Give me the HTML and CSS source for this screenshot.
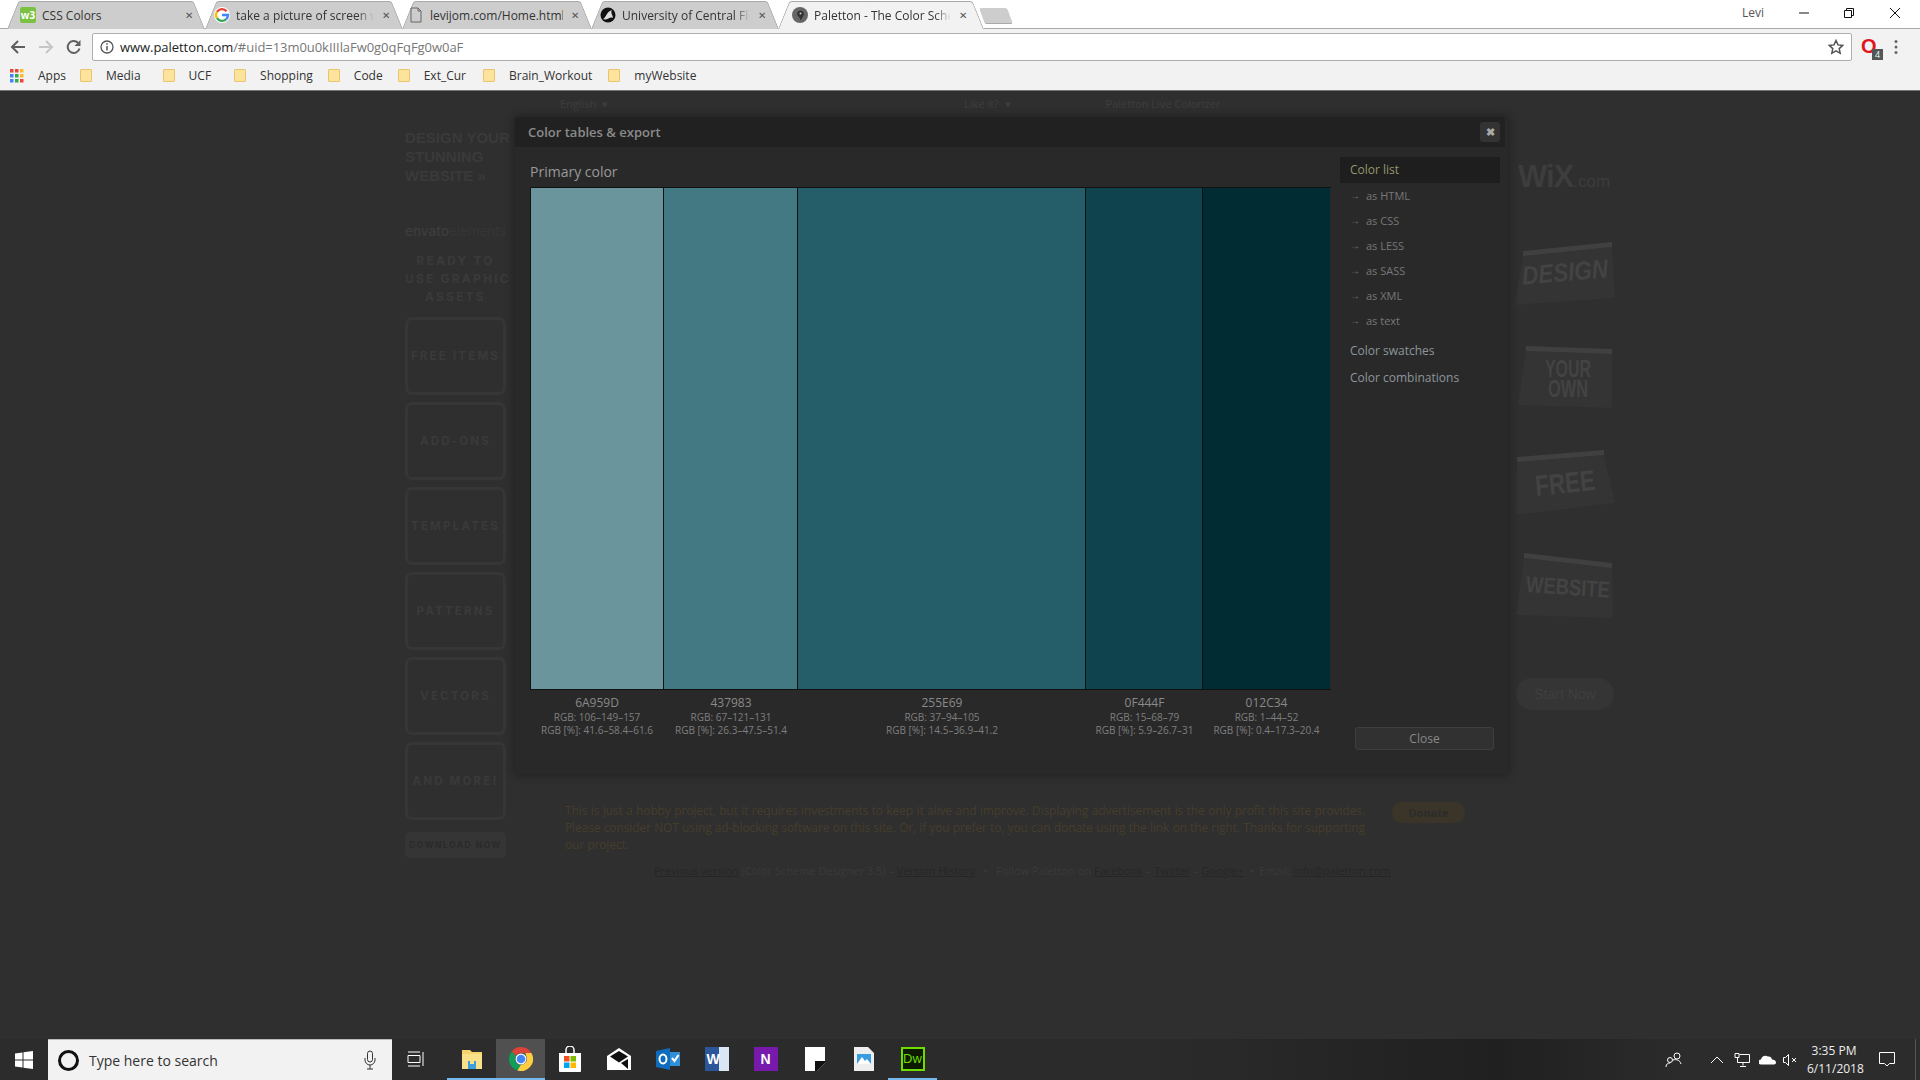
FILE: index.html
```html
<!DOCTYPE html>
<html lang="en">
<head>
    <meta charset="UTF-8">
    <title>Paletton - The Color Scheme Designer</title>
    <link rel="stylesheet" href="styles.css">
</head>
<body>
    <!-- browser chrome -->
    <div class="tabstrip">
        <div class="tab tab-1">
            <span class="w3-icon">w3</span>
            <span class="tab-title">CSS Colors</span>
            <span class="tab-close">&#10005;</span>
        </div>
        <div class="tab tab-2">
            <svg class="fav" viewBox="0 0 16 16">
                <circle cx="8" cy="8" r="8" fill="#fff"/>
                <path d="M12.6 4.2A6 6 0 0 0 3 4.8" fill="none" stroke="#ea4335" stroke-width="2.4"/>
                <path d="M3 4.8a6 6 0 0 0 0 6.4" fill="none" stroke="#fbbc05" stroke-width="2.4"/>
                <path d="M3 11.2a6 6 0 0 0 9 1.2" fill="none" stroke="#34a853" stroke-width="2.4"/>
                <path d="M8 8h6a6 6 0 0 1-2 4.4" fill="none" stroke="#4285f4" stroke-width="2.4"/>
            </svg>
            <span class="tab-title">take a picture of screen w</span>
            <span class="tab-close">&#10005;</span>
        </div>
        <div class="tab tab-3">
            <svg class="fav" viewBox="0 0 16 16"><path d="M3 1h7l3 3v11H3zM10 1v3h3" fill="none" stroke="#666"/></svg>
            <span class="tab-title">levijom.com/Home.html</span>
            <span class="tab-close">&#10005;</span>
        </div>
        <div class="tab tab-4">
            <svg class="fav" viewBox="0 0 16 16"><circle cx="8" cy="8" r="7.5" fill="#111"/><path d="M3 12c3-1 3-7 9-9-2 3 1 5 1 8-3-2-6 3-10 1z" fill="#ddd"/></svg>
            <span class="tab-title">University of Central Flori</span>
            <span class="tab-close">&#10005;</span>
        </div>
        <div class="tab tab-5 active">
            <svg class="fav" viewBox="0 0 16 16"><circle cx="8" cy="8" r="8" fill="#666"/><path d="M5 7a3.5 3.5 0 1 1 6 2.500c-1 1-1.500 3-2 4-1-1-1-3-2.500-4A3.500 3.500 0 0 1 5 7z" fill="#333"/><circle cx="8.500" cy="6.500" r="1" fill="#ccc"/></svg>
            <span class="tab-title">Paletton - The Color Sche</span>
            <span class="tab-close">&#10005;</span>
        </div>
        <div class="new-tab"></div>
        <div class="win-controls">
            <span class="profile">Levi</span>
            <svg class="win-btn btn-min" viewBox="0 0 10 10"><path d="M0 5h10" stroke="#111"/></svg>
            <svg class="win-btn btn-max" viewBox="0 0 10 10"><path d="M.5 2.500h7v7h-7zM2.500 2.500v-2h7v7h-2" fill="none" stroke="#111"/></svg>
            <svg class="win-btn btn-x" viewBox="0 0 10 10"><path d="M0 0l10 10M10 0L0 10" stroke="#111"/></svg>
        </div>
    </div>

    <div class="toolbar">
        <svg class="nav nav-back" viewBox="0 0 16 16"><path d="M15 8H2M8 2L2 8l6 6" fill="none" stroke="#5f5f5f" stroke-width="2"/></svg>
        <svg class="nav nav-fwd" viewBox="0 0 16 16"><path d="M1 8h13M8 2l6 6-6 6" fill="none" stroke="#c6c6c6" stroke-width="2"/></svg>
        <svg class="nav nav-reload" viewBox="0 0 16 16"><path d="M13.500 9.500A6 6 0 1 1 12 3.800" fill="none" stroke="#5f5f5f" stroke-width="2"/><path d="M14.500 1v6h-6z" fill="#5f5f5f"/></svg>
        <div class="omnibox">
            <svg class="info" viewBox="0 0 14 14"><circle cx="7" cy="7" r="6" fill="none" stroke="#555" stroke-width="1.300"/><path d="M7 6v4.500M7 3.300v1.500" stroke="#555" stroke-width="1.500"/></svg>
            <span class="url">www.paletton.com<span class="url-rest">/#uid=13m0u0kIIIlaFw0g0qFqFg0w0aF</span></span>
            <svg class="star" viewBox="0 0 16 16"><path d="M8 1.500l2 4.400 4.800.5-3.600 3.200 1 4.700L8 11.900l-4.200 2.400 1-4.700L1.200 6.400 6 5.900z" fill="none" stroke="#555" stroke-width="1.500"/></svg>
        </div>
        <div class="ext-icon">
            <span class="opera">O</span>
            <span class="ext-badge">4</span>
        </div>
        <svg class="menu-dots" viewBox="0 0 4 16"><circle cx="2" cy="2.500" r="1.500" fill="#666"/><circle cx="2" cy="8" r="1.500" fill="#666"/><circle cx="2" cy="13.500" r="1.500" fill="#666"/></svg>
    </div>

    <div class="bookmarks">
        <svg class="apps-icon" viewBox="0 0 14 14">
            <rect width="3.500" height="3.500" fill="#e8453c"/><rect x="5" width="3.500" height="3.500" fill="#e8453c"/><rect x="10" width="3.500" height="3.500" fill="#f9bb2d"/>
            <rect y="5" width="3.500" height="3.500" fill="#4285f4"/><rect x="5" y="5" width="3.500" height="3.500" fill="#34a853"/><rect x="10" y="5" width="3.500" height="3.500" fill="#f9bb2d"/>
            <rect y="10" width="3.500" height="3.500" fill="#4285f4"/><rect x="5" y="10" width="3.500" height="3.500" fill="#34a853"/><rect x="10" y="10" width="3.500" height="3.500" fill="#e8453c"/>
        </svg>
        <span class="bm bm-apps">Apps</span>
        <span class="folder folder-1"></span><span class="bm">Media</span>
        <span class="folder folder-2"></span><span class="bm">UCF</span>
        <span class="folder folder-3"></span><span class="bm">Shopping</span>
        <span class="folder folder-4"></span><span class="bm">Code</span>
        <span class="folder folder-5"></span><span class="bm">Ext_Cur</span>
        <span class="folder folder-6"></span><span class="bm">Brain_Workout</span>
        <span class="folder folder-7"></span><span class="bm">myWebsite</span>
    </div>

    <!-- the dimmed page -->
    <main class="page">
        <aside class="left-ad">
            <div class="ad-title">DESIGN YOUR<br>STUNNING<br>WEBSITE &raquo;</div>
            <div class="envato"><b>envato</b>elements</div>
            <div class="ready">READY TO<br>USE GRAPHIC<br>ASSETS</div>
            <div class="ad-box">FREE ITEMS</div>
            <div class="ad-box">ADD-ONS</div>
            <div class="ad-box">TEMPLATES</div>
            <div class="ad-box">PATTERNS</div>
            <div class="ad-box">VECTORS</div>
            <div class="ad-box">AND MORE!</div>
            <div class="ad-download">DOWNLOAD NOW</div>
        </aside>

        <section class="center">
            <div class="top-row">
                <span class="lang">English &nbsp;&#9662;</span>
                <span class="like">Like it? &nbsp;&#9662;</span>
                <span class="live">Paletton Live Colorizer</span>
            </div>
            <div class="hobby">
                <p>This is just a hobby project, but it requires investments to keep it alive and improve. Displaying advertisement is the only profit this site provides. Please consider NOT using ad-blocking software on this site. Or, if you prefer to, you can donate using the link on the right. Thanks for supporting our project.</p>
                <span class="donate">Donate</span>
            </div>
            <div class="credits"><u>Previous version</u> (Color Scheme Designer 3.5) &ndash; <u>Version History</u> &nbsp; &bull; &nbsp; Follow Paletton on <u>Facebook</u> &ndash; <u>Twitter</u> &ndash; <u>Google+</u> &nbsp;&bull;&nbsp; Email: <u>info@paletton.com</u></div>
        </section>

        <aside class="right-ad">
            <div class="wix"><b>WiX</b>.com</div>
            <svg class="wix-card" viewBox="0 0 110 75">
                <polygon class="card-body" points="13,20 102,11 105,62 5,69"/>
                <polygon class="card-bar" points="13,15 102,6 102,11 13,20"/>
                <text class="card-text" x="55" y="45" font-style="italic" font-size="26" textLength="86" lengthAdjust="spacingAndGlyphs" transform="rotate(-5 55 37)">DESIGN</text>
            </svg>
            <svg class="wix-card" viewBox="0 0 110 75">
                <polygon class="card-body" points="16,10 102,13 102,67 8,64"/>
                <polygon class="card-bar" points="16,5 102,8 102,13 16,10"/>
                <text class="card-text" x="58" y="36" font-size="23" textLength="46" lengthAdjust="spacingAndGlyphs">YOUR</text>
                <text class="card-text" x="58" y="56" font-size="23" textLength="40" lengthAdjust="spacingAndGlyphs">OWN</text>
            </svg>
            <svg class="wix-card" viewBox="0 0 110 75">
                <polygon class="card-body" points="7,16 94,9 105,57 6,69"/>
                <polygon class="card-bar" points="7,11 94,4 94,9 7,16"/>
                <text class="card-text" x="55" y="47" font-size="29" textLength="60" lengthAdjust="spacingAndGlyphs" transform="rotate(-6 55 37)">FREE</text>
            </svg>
            <svg class="wix-card" viewBox="0 0 110 75">
                <polygon class="card-body" points="14,7 102,17 103,67 6,64"/>
                <polygon class="card-bar" points="14,2 102,12 102,17 14,7"/>
                <text class="card-text" x="58" y="44" font-size="23" textLength="84" lengthAdjust="spacingAndGlyphs" transform="rotate(4 58 36)">WEBSITE</text>
            </svg>
            <div class="start-now">Start Now</div>
        </aside>

        <!-- modal -->
        <div class="modal">
            <div class="modal-head">
                <span>Color tables &amp; export</span>
                <span class="modal-x">&#10006;</span>
            </div>
            <div class="modal-body">
                <div class="table-col">
                    <h3>Primary color</h3>
                    <div class="swatches">
                        <div class="swatch sw-1"></div>
                        <div class="swatch sw-2"></div>
                        <div class="swatch sw-3"></div>
                        <div class="swatch sw-4"></div>
                        <div class="swatch sw-5"></div>
                    </div>
                    <div class="labels">
                        <div class="label sw-1"><h5>6A959D</h5><p>RGB: 106&ndash;149&ndash;157</p><p>RGB [%]: 41.6&ndash;58.4&ndash;61.6</p></div>
                        <div class="label sw-2"><h5>437983</h5><p>RGB: 67&ndash;121&ndash;131</p><p>RGB [%]: 26.3&ndash;47.5&ndash;51.4</p></div>
                        <div class="label sw-3"><h5>255E69</h5><p>RGB: 37&ndash;94&ndash;105</p><p>RGB [%]: 14.5&ndash;36.9&ndash;41.2</p></div>
                        <div class="label sw-4"><h5>0F444F</h5><p>RGB: 15&ndash;68&ndash;79</p><p>RGB [%]: 5.9&ndash;26.7&ndash;31</p></div>
                        <div class="label sw-5"><h5>012C34</h5><p>RGB: 1&ndash;44&ndash;52</p><p>RGB [%]: 0.4&ndash;17.3&ndash;20.4</p></div>
                    </div>
                </div>
                <div class="side">
                    <div class="side-item selected">Color list</div>
                    <div class="side-sub">&rarr;<span>as HTML</span></div>
                    <div class="side-sub">&rarr;<span>as CSS</span></div>
                    <div class="side-sub">&rarr;<span>as LESS</span></div>
                    <div class="side-sub">&rarr;<span>as SASS</span></div>
                    <div class="side-sub">&rarr;<span>as XML</span></div>
                    <div class="side-sub">&rarr;<span>as text</span></div>
                    <div class="side-item first">Color swatches</div>
                    <div class="side-item">Color combinations</div>
                    <button class="close-btn">Close</button>
                </div>
            </div>
        </div>
    </main>

    <!-- windows taskbar -->
    <footer class="taskbar">
        <div class="start">
            <svg viewBox="0 0 18 18" width="18" height="18"><path d="M0 2.500l7.500-1v7H0zM8.500 1.300L18 0v8.500H8.500zM0 9.500h7.500v7l-7.500-1zM8.500 9.500H18V18l-9.500-1.300z" fill="#fff"/></svg>
        </div>
        <div class="search">
            <span class="cortana"></span>
            <span class="search-text">Type here to search</span>
            <svg class="mic" viewBox="0 0 12 20" width="12" height="20"><rect x="3.500" y="1" width="5" height="11" rx="2.500" fill="none" stroke="#333"/><path d="M1 8v2a5 5 0 0 0 10 0V8M6 15v4M3 19h6" fill="none" stroke="#333"/></svg>
        </div>
        <div class="task-btn task-view">
            <svg viewBox="0 0 18 18" width="18" height="18"><path d="M1 5.500h12v7H1zM1 2h12M1 16h12M16 2v14" fill="none" stroke="#fff"/></svg>
        </div>
        <div class="task-btn open">
            <svg viewBox="0 0 24 24" width="24" height="24"><path d="M2 3h8l2 2h10v4H2z" fill="#f6d36a"/><path d="M2 7h20v15H2z" fill="#fbe08c"/><path d="M8 14h8v8H8z" fill="#3f9fdc"/><path d="M10 14h4v3h-4z" fill="#fbe08c"/></svg>
        </div>
        <div class="task-btn open current">
            <svg viewBox="0 0 24 24" width="24" height="24"><path d="M12 0a12 12 0 0 1 10.400 6H12a6 6 0 0 0-5.200 3L2.700 4.400A12 12 0 0 1 12 0z" fill="#db4437"/><path d="M2.700 4.400L6.800 9a6 6 0 0 0 5 9l-3.400 5.500A12 12 0 0 1 2.700 4.400z" fill="#0f9d58"/><path d="M22.400 6a12 12 0 0 1-14 17.500l3.400-5.500a6 6 0 0 0 5.400-9 6 6 0 0 0-1-3z" fill="#ffcd40"/><circle cx="12" cy="12" r="5.500" fill="#fff"/><circle cx="12" cy="12" r="4.300" fill="#4285f4"/></svg>
        </div>
        <div class="task-btn">
            <svg viewBox="0 0 24 26" width="24" height="26"><path d="M8 7V4a4 4 0 0 1 8 0v3" fill="none" stroke="#fff" stroke-width="1.500"/><path d="M1 7h22v18a1 1 0 0 1-1 1H2a1 1 0 0 1-1-1z" fill="#fff"/><rect x="6" y="10" width="5.500" height="5.500" fill="#f25022"/><rect x="12.500" y="10" width="5.500" height="5.500" fill="#7fba00"/><rect x="6" y="16.500" width="5.500" height="5.500" fill="#00a4ef"/><rect x="12.500" y="16.500" width="5.500" height="5.500" fill="#ffb900"/></svg>
        </div>
        <div class="task-btn">
            <svg viewBox="0 0 24 24" width="24" height="24"><path d="M0 9L12 1l12 8v14H0z" fill="#fff"/><path d="M3 9.500L12 4l9 5.500-9 6z" fill="#111"/><path d="M21 22l-7-6 7-4z" fill="#111"/></svg>
        </div>
        <div class="task-btn">
            <svg viewBox="0 0 24 24" width="24" height="24"><path d="M14 1L0 4v16l14 3z" fill="#0f6cbd"/><rect x="14" y="5" width="10" height="14" fill="#2f8fd8"/><ellipse cx="7" cy="12" rx="3.500" ry="4.500" fill="none" stroke="#fff" stroke-width="2"/><path d="M16 11l2.500 3 4-6" fill="none" stroke="#fff" stroke-width="2"/></svg>
        </div>
        <div class="task-btn">
            <span class="app-word">W</span>
        </div>
        <div class="task-btn">
            <span class="app-one">N</span>
        </div>
        <div class="task-btn">
            <svg viewBox="0 0 20 24" width="20" height="24"><path d="M0 0h20v16l-8 8H0z" fill="#fff"/><path d="M20 14v2l-8 8h-2v-10z" fill="#111"/></svg>
        </div>
        <div class="task-btn">
            <svg viewBox="0 0 20 24" width="20" height="24"><path d="M0 0h14l6 6v18H0z" fill="#eee"/><path d="M3 7h14v10H3z" fill="#3a9be0"/><path d="M3 17l5-7 3 4 2-2 4 5z" fill="#fff"/></svg>
        </div>
        <div class="task-btn open">
            <span class="app-dw">Dw</span>
        </div>

        <div class="tray">
            <svg class="tray-people" viewBox="0 0 18 16" width="18" height="16"><circle cx="12" cy="4" r="3" fill="none" stroke="#fff"/><circle cx="5" cy="8" r="2.500" fill="none" stroke="#fff"/><path d="M1 15c0-3 2-4 4-4M8 8c3-1 7 0 8 4" fill="none" stroke="#fff"/></svg>
            <svg class="tray-chevron" viewBox="0 0 14 8" width="14" height="8"><path d="M1 7l6-6 6 6" fill="none" stroke="#fff"/></svg>
            <svg class="tray-net" viewBox="0 0 16 14" width="16" height="14"><path d="M1 .5h4v4H1zM5.500 1.500h10v8h-12v-5M9 9.500v3M6 13.500h6" fill="none" stroke="#fff"/></svg>
            <svg class="tray-cloud" viewBox="0 0 17 11" width="17" height="11"><path d="M2 10.500a2.500 2.500 0 0 1 0-5c.5-3 4-5 7-3 2-.5 4 1 4 3 2 0 4 1 4 3 0 1-1 2-2 2z" fill="#fff"/></svg>
            <svg class="tray-vol" viewBox="0 0 15 12" width="15" height="12"><path d="M.5 3.500h2l3-3v11l-3-3h-2z" fill="none" stroke="#fff"/><path d="M9 4l4 4M13 4l-4 4" stroke="#fff"/></svg>
            <div class="clock"><div>3:35 PM</div><div>6/11/2018</div></div>
            <svg class="tray-note" viewBox="0 0 16 15" width="16" height="15"><path d="M.5.500h15v11h-5l-2.500 2.500-2.500-2.500h-5z" fill="none" stroke="#fff"/></svg>
            <span class="show-desktop"></span>
        </div>
    </footer>
</body>
</html>
```

FILE: styles.css
```css
* {
    box-sizing: border-box;
}
html, body {
    margin: 0;
    padding: 0;
    height: 100%;
    overflow: hidden;
}
body {
    width: 1920px;
    height: 1080px;
    display: flex;
    flex-direction: column;
    font-family: "Open Sans", "Liberation Sans", sans-serif;
    background: #2f2f2f;
}

/* tab strip */
.tabstrip {
    height: 29px;
    flex: none;
    background: #fff;
    border-bottom: 1px solid #aaa;
    display: flex;
    padding-left: 7px;
    align-items: flex-end;
}
.tab {
    position: relative;
    height: 28px;
    display: flex;
    align-items: center;
    isolation: isolate;
    font-size: 12px;
    color: #333;
    flex: none;
    margin-bottom: -1px;
}
.tab::before, .tab::after {
    content: "";
    position: absolute;
    top: 0;
    bottom: 0;
    width: 50%;
    background: #cdcdcd;
    border-top: 1px solid #a8a8a8;
    z-index: -1;
}
.tab::before {
    left: 0;
    border-left: 1px solid #a8a8a8;
    border-radius: 3px 0 0 0;
    transform-origin: bottom left;
    transform: skewX(-22deg);
}
.tab::after {
    right: 0;
    border-right: 1px solid #a8a8a8;
    border-radius: 0 3px 0 0;
    transform-origin: bottom right;
    transform: skewX(22deg);
}
.tab.active::before, .tab.active::after {
    background: #f2f2f2;
}
.tab-1 { width: 198px; padding-left: 13px; }
.tab-2 { width: 197px; padding-left: 9px; }
.tab-3 { width: 189px; padding-left: 6px; }
.tab-4 { width: 187px; padding-left: 9px; }
.tab-5 { width: 206px; padding-left: 14px; z-index: 2; }
.w3-icon {
    width: 16px;
    height: 16px;
    background: #7cc242;
    color: #fff;
    font-size: 10px;
    font-weight: 700;
    line-height: 16px;
    text-align: center;
    flex: none;
    border-radius: 2px;
}
.fav {
    width: 16px;
    height: 16px;
    flex: none;
}
.tab-title {
    margin-left: 6px;
    white-space: nowrap;
    overflow: hidden;
    flex: 1;
    min-width: 0;
    -webkit-mask-image: linear-gradient(to right, #000 88%, transparent);
    mask-image: linear-gradient(to right, #000 88%, transparent);
}
.tab-3 .tab-title, .tab-1 .tab-title {
    -webkit-mask-image: none;
    mask-image: none;
}
.tab-close {
    font-size: 10px;
    color: #555;
    margin: 0 12px 0 8px;
    flex: none;
}
.tab-5 .tab-close {
    margin-right: 17px;
}
.new-tab {
    width: 28px;
    height: 16px;
    margin: 0 0 4px -2px;
    background: #cdcdcd;
    border-bottom: 1px solid #aaa;
    border-radius: 2px;
    transform: skewX(20deg);
    flex: none;
}
.win-controls {
    margin-left: auto;
    display: flex;
    align-items: center;
    height: 28px;
    padding-bottom: 3px;
}
.profile {
    font-size: 12px;
    color: #555;
    margin-right: 35px;
}
.win-btn {
    width: 10px;
    height: 10px;
}
.btn-max { margin: 0 36px 0 35px; }
.btn-x { margin-right: 20px; }

/* toolbar */
.toolbar {
    height: 32px;
    flex: none;
    background: #f2f2f2;
    display: flex;
    align-items: center;
    padding-top: 3px;
}
.nav {
    width: 16px;
    height: 16px;
    flex: none;
}
.nav-back { margin-left: 10px; }
.nav-fwd { margin-left: 12px; }
.nav-reload { margin-left: 12px; }
.omnibox {
    margin-left: 10px;
    width: 1760px;
    height: 28px;
    background: #fff;
    border: 1px solid #aeaeae;
    border-radius: 2px;
    display: flex;
    align-items: center;
    padding: 0 7px 0 7px;
}
.info {
    width: 14px;
    height: 14px;
    flex: none;
}
.url {
    margin-left: 6px;
    font-size: 13px;
    color: #222;
    letter-spacing: -.05px;
}
.url-rest {
    color: #777;
}
.star {
    margin-left: auto;
    width: 16px;
    height: 16px;
}
.ext-icon {
    position: relative;
    width: 22px;
    margin-left: 9px;
    height: 22px;
}
.opera {
    color: #e0141e;
    font-family: "Liberation Sans", sans-serif;
    font-weight: 700;
    font-size: 20px;
    line-height: 20px;
}
.ext-badge {
    position: absolute;
    right: 0;
    bottom: -2px;
    width: 11px;
    height: 11px;
    background: #555;
    color: #dff;
    font-size: 9px;
    line-height: 11px;
    text-align: center;
}
.menu-dots {
    margin-left: 11px;
    width: 4px;
    height: 16px;
}

/* bookmarks */
.bookmarks {
    height: 29px;
    flex: none;
    background: #f2f2f2;
    display: flex;
    align-items: center;
    font-size: 12px;
    color: #333;
}
.apps-icon {
    width: 14px;
    height: 14px;
    margin-left: 10px;
}
.bm-apps { margin-left: 14px; }
.folder {
    width: 12px;
    height: 13px;
    background: #fde39b;
    border: 1px solid #e9c66d;
    border-radius: 1px;
}
.folder + .bm { margin-left: 14px; }
.folder-1 { margin-left: 14px; }
.folder-2 { margin-left: 22px; }
.folder-3 { margin-left: 23px; }
.folder-4 { margin-left: 15px; }
.folder-5 { margin-left: 15px; }
.folder-6 { margin-left: 17px; }
.folder-7 { margin-left: 16px; }

/* dimmed page behind the modal */
.page {
    position: relative;
    height: 950px;
    flex: none;
    display: flex;
    padding-left: 405px;
    background: #2f2f2f;
    border-top: 1px solid #777;
}
.left-ad {
    width: 101px;
    flex: none;
    padding-top: 37px;
    font-family: "Liberation Sans", sans-serif;
    color: #3a3a3a;
}
.ad-title {
    font-size: 15px;
    font-weight: 700;
    line-height: 19px;
    white-space: nowrap;
}
.envato {
    margin-top: 36px;
    font-family: "Inter", sans-serif;
    font-size: 13.500px;
    line-height: 21px;
    white-space: nowrap;
    color: #363636;
}
.envato b { color: #3d3d3d; font-weight: 500; }
.ready {
    margin-top: 10px;
    font-family: "Inter", sans-serif;
    font-size: 12px;
    font-weight: 700;
    letter-spacing: 2.200px;
    line-height: 18px;
    text-align: center;
    white-space: nowrap;
}
.ad-box {
    height: 78px;
    margin-top: 7px;
    border: 3px solid #363636;
    border-radius: 7px;
    font-family: "Inter", sans-serif;
    font-size: 11.500px;
    font-weight: 700;
    letter-spacing: 2.200px;
    display: flex;
    align-items: center;
    justify-content: center;
    white-space: nowrap;
}
.ready + .ad-box {
    margin-top: 11px;
}
.ad-download {
    height: 26px;
    margin-top: 12px;
    background: #353535;
    border-radius: 5px;
    color: #2a2a2a;
    font-family: "Inter", sans-serif;
    font-size: 8.500px;
    font-weight: 700;
    letter-spacing: 1.500px;
    line-height: 26px;
    text-align: center;
    white-space: nowrap;
}
.center {
    width: 1004px;
    flex: none;
    padding-left: 59px;
    font-size: 12px;
}
.top-row {
    height: 28px;
    padding: 5px 0 0 0;
    margin-left: -5px;
    font-size: 11px;
    line-height: 16px;
    color: #3e3e3e;
    display: flex;
}
.like { margin-left: 356px; }
.live { margin-left: 95px; }
.hobby {
    margin-top: 683px;
    display: flex;
    align-items: flex-start;
}
.hobby p {
    margin: 0;
    width: 800px;
    line-height: 17px;
    text-align: justify;
    color: #463d2b;
    letter-spacing: -.1px;
}
.donate {
    margin-left: 27px;
    width: 73px;
    height: 21px;
    background: #3a3528;
    border-radius: 10px;
    color: #2c2c2c;
    font-weight: 700;
    font-size: 11px;
    line-height: 21px;
    text-align: center;
}
.credits {
    margin: 10px 0 0 89px;
    white-space: nowrap;
    font-size: 11px;
    line-height: 16px;
    color: #3a3a3a;
}
.credits u {
    color: #262626;
}
.right-ad {
    width: 110px;
    flex: none;
    font-family: "Liberation Sans", sans-serif;
    padding-top: 74px;
}
.wix {
    height: 24px;
    margin-left: 8px;
    font-size: 17px;
    line-height: 24px;
    color: #3d3d3d;
    white-space: nowrap;
}
.wix b {
    font-size: 31px;
    letter-spacing: -1px;
}
.wix-card {
    display: block;
    width: 110px;
    height: 75px;
    margin-top: 30px;
}
.wix-card:first-of-type {
    margin-top: 47px;
}
.card-body { fill: #343434; }
.card-bar { fill: #404040; }
.card-text {
    fill: #434343;
    font-family: "Liberation Sans", sans-serif;
    font-weight: 700;
    text-anchor: middle;
}
.start-now {
    width: 98px;
    height: 32px;
    margin: 52px 0 0 6px;
    background: #353535;
    border-radius: 16px;
    color: #3f3f3f;
    font-size: 14px;
    line-height: 32px;
    text-align: center;
}

/* modal */
.modal {
    position: absolute;
    left: 515px;
    top: 26px;
    width: 993px;
    height: 657px;
    background: #292929;
    border-radius: 3px;
    box-shadow: 0 0 10px #1d1d1d;
    display: flex;
    flex-direction: column;
    color: #8a8a8a;
}
.modal-head {
    height: 30px;
    flex: none;
    margin-right: 3px;
    background: #212121;
    border-radius: 3px 3px 0 0;
    padding: 0 5px 0 13px;
    display: flex;
    align-items: center;
    justify-content: space-between;
    font-size: 13px;
    font-weight: 600;
    color: #8b8b8b;
}
.modal-x {
    width: 20px;
    height: 20px;
    background: #333;
    border-radius: 3px;
    color: #aaa;
    font-size: 11px;
    line-height: 20px;
    text-align: center;
}
.modal-body {
    flex: 1;
    display: flex;
    min-height: 0;
}
.table-col {
    width: 801px;
    margin-left: 15px;
    flex: none;
}
.table-col h3 {
    margin: 0;
    height: 40px;
    padding-top: 15px;
    font-size: 14px;
    font-weight: 400;
    line-height: 20px;
    color: #999;
}
.swatches {
    display: flex;
    height: 503px;
    border: solid #111;
    border-width: 1px 0 1px 1px;
}
.labels {
    display: flex;
}
.swatch {
    border-right: 1px solid #111;
}
.swatches .sw-1 { width: 133px; background: #6A959D; }
.swatches .sw-2 { width: 134px; background: #437983; }
.swatches .sw-3 { width: 288px; background: #255E69; }
.swatches .sw-4 { width: 117px; background: #0F444F; }
.swatches .sw-5 { width: 127px; background: #012C34; border-right: 0; }
.labels .sw-1 { width: 134px; }
.labels .sw-2 { width: 134px; }
.labels .sw-3 { width: 288px; }
.labels .sw-4 { width: 117px; }
.labels .sw-5 { width: 127px; }
.label {
    padding-top: 5px;
    text-align: center;
    white-space: nowrap;
}
.label h5 {
    margin: 0;
    font-size: 12px;
    font-weight: 400;
    line-height: 16px;
    color: #8a8a8a;
}
.label p {
    margin: 0;
    font-size: 10px;
    line-height: 13px;
    color: #7f7f7f;
}
.side {
    flex: 1;
    margin-left: 9px;
    padding-top: 10px;
    display: flex;
    flex-direction: column;
    font-size: 12px;
    min-width: 0;
}
.side-item {
    width: 160px;
    height: 26.500px;
    padding-left: 10px;
    line-height: 26px;
    color: #8d959b;
}
.side-item.selected {
    height: 26px;
    background: #1e1e1e;
    color: #96966a;
}
.side-item.first {
    margin-top: 5px;
}
.side-sub {
    width: 160px;
    height: 25px;
    padding-left: 10px;
    line-height: 25px;
    font-size: 10px;
    color: #777;
    display: flex;
}
.side-sub span {
    margin-left: 6px;
    font-size: 11px;
}
.close-btn {
    margin: auto 0 24px 15px;
    width: 139px;
    height: 23px;
    background: #313131;
    border: 1px solid #3e3e3e;
    border-radius: 3px;
    font-family: inherit;
    font-size: 12px;
    color: #888;
    padding: 0;
}

/* taskbar */
.taskbar {
    height: 41px;
    margin-top: -1px;
    flex: none;
    position: relative;
    display: flex;
    align-items: stretch;
    background: linear-gradient(to right, #2c2c2c 0%, #2b2b2b 60%, #202020 78%, #2c2c2c 88%);
    color: #fff;
}
.start {
    width: 48px;
    display: flex;
    align-items: center;
    justify-content: center;
}
.search {
    width: 344px;
    background: #f2f2f2;
    border-top: 1px solid #bbb;
    display: flex;
    align-items: center;
    padding-left: 10px;
    color: #333;
    font-size: 14px;
}
.cortana {
    width: 21px;
    height: 21px;
    border: 3px solid #111;
    border-radius: 50%;
    flex: none;
}
.search-text {
    margin-left: 10px;
}
.mic {
    margin-left: auto;
    margin-right: 16px;
}
.task-btn {
    width: 49px;
    display: flex;
    align-items: center;
    justify-content: center;
    flex: none;
    border-bottom: 2px solid transparent;
}
.task-view {
    width: 47px;
    margin-right: 8px;
}
.task-btn.open {
    border-bottom-color: #76b9ed;
}
.task-btn.current {
    background: #505050;
}
.app-word, .app-one, .app-dw {
    display: block;
    width: 24px;
    height: 24px;
    font-family: "Liberation Sans", sans-serif;
    font-size: 14px;
    font-weight: 700;
    line-height: 24px;
    text-align: center;
}
.app-word { background: linear-gradient(to right, #2b579a 60%, #dbe6f4 60%); color: #fff; text-align: left; padding-left: 2px; }
.app-one { background: #7719aa; color: #fff; }
.app-dw { background: #0c1a00; border: 2px solid #6fdc00; color: #6fdc00; line-height: 20px; font-size: 13px; font-weight: 400; }
.tray {
    margin-left: auto;
    display: flex;
    align-items: center;
    position: relative;
}
.tray-chevron { margin-left: 27px; }
.tray-net { margin-left: 10px; }
.tray-cloud { margin-left: 9px; }
.tray-vol { margin-left: 7px; }
.clock {
    margin-left: 9px;
    width: 54px;
    text-align: center;
    font-size: 12px;
    line-height: 18px;
    color: #eee;
}
.tray-note { margin-left: 18px; margin-right: 25px; }
.show-desktop {
    position: absolute;
    right: 4px;
    top: 0;
    bottom: 0;
    width: 1px;
    background: #555;
}
```
